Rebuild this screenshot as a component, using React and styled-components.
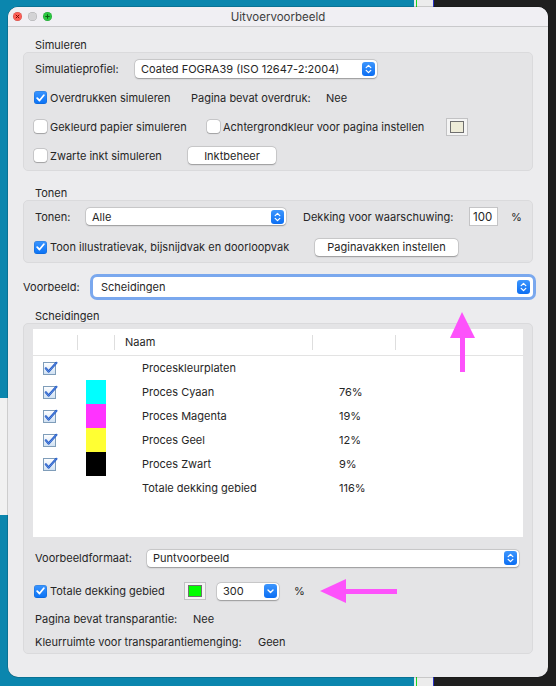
import React from "react";
import styled, { createGlobalStyle, css } from "styled-components";

const Global = createGlobalStyle`
  html, body { margin: 0; padding: 0; }
  body {
    width: 556px; height: 686px; overflow: hidden;
    font-family: "Inter", "Noto Sans", sans-serif;
    background:
      linear-gradient(#f1f1f1, #f1f1f1) 0 398px / 8px 117px no-repeat,
      linear-gradient(to right, #0b86ae 0 414px, #ececec 414px 416px, #1fd81f 416px 417px, #ececec 417px 433px, #2a33c8 433px 434px, #1f1f1f 434px);
  }
  #root { padding: 7px 0 0 8px; }
`;

const Window = styled.div`
  position: relative;
  width: 540px; height: 670px;
  background: #ececee;
  border-radius: 10px;
  overflow: hidden;
  box-shadow: 0 0 0 0.5px rgba(0,0,0,.3);
  color: #262626;
  font-size: 11px;
  display: flex; flex-direction: column;
`;

const TitleBar = styled.div`
  height: 19px; flex: none;
  background: #f0eff3;
  border-bottom: 1px solid #c9c9cb;
  display: grid; grid-template-columns: 60px 1fr 60px; align-items: center;
`;
const Lights = styled.div`display: flex; gap: 6px; padding-left: 5px;`;
const Light = styled.div`
  width: 9px; height: 9px; border-radius: 50%;
  background: ${p => p.$c};
  box-shadow: inset 0 0 0 0.5px rgba(0,0,0,.2);
  display: flex; align-items: center; justify-content: center;
`;
const Title = styled.div`text-align: center; font-size: 11.5px; color: #3d3d3d;`;

const Content = styled.div`padding: 0 15px; display: flex; flex-direction: column;`;

const SectionLabel = styled.div`
  margin-top: ${p => p.$mt}px; height: 14px; line-height: 14px; padding-left: 12px;
`;

const Group = styled.div`
  background: #e4e4e6;
  border: 1px solid #dadadc;
  border-radius: 5px;
  padding: ${p => p.$pad || "1px 11px 0"};
  display: flex; flex-direction: column;
`;

const Row = styled.div`
  display: flex; align-items: center; height: ${p => p.$h || 29}px; flex: none;
  margin-top: ${p => p.$mt || 0}px;
  padding-left: ${p => p.$pl || 0}px;
`;
const Cell = styled.div`
  width: ${p => p.$w ? p.$w + "px" : "auto"}; flex: none;
  display: flex; align-items: center; white-space: nowrap;
`;
const Text = styled.span`white-space: nowrap; margin-left: ${p => p.$ml || 0}px;`;

const Box = styled.div`
  width: 13px; height: 13px; border-radius: 3px; flex: none; box-sizing: border-box;
  margin-left: -1px; margin-right: 3px;
  display: flex; align-items: center; justify-content: center;
  ${p => p.$on ? css`
    background: linear-gradient(#3a95ff, #0a72f5);
    box-shadow: inset 0 0 0 0.5px rgba(0,0,0,.15);
  ` : css`
    background: #fff;
    box-shadow: 0 0 0 0.5px rgba(0,0,0,.22), 0 0.5px 1px rgba(0,0,0,.2);
  `}
`;

const Check = ({ on, children }) => (
  <>
    <Box $on={on}>
      {on && (
        <svg width="9" height="8" viewBox="0 0 9 8">
          <path d="M1.2 4.2 L3.5 6.5 L7.8 1.3" fill="none" stroke="#fff" strokeWidth="1.8" strokeLinecap="round" strokeLinejoin="round" />
        </svg>
      )}
    </Box>
    <Text>{children}</Text>
  </>
);

const Select = styled.div`
  width: ${p => p.$w}px; height: ${p => p.$h || 17}px; flex: none;
  box-sizing: border-box;
  background: #fff; border-radius: 4px;
  box-shadow: 0 0 0 0.5px rgba(0,0,0,.16), 0 0.5px 1.5px rgba(0,0,0,.28);
  display: flex; align-items: center; justify-content: space-between;
  padding: 0 2px 0 6px;
  ${p => p.$focus && css`
    box-shadow: 0 0 0 3px #7aa8ee, 0 0 0 0.5px rgba(0,0,0,.3);
    padding: 0 3px 0 8px;
  `}
`;

const Stepper = ({ single }) => (
  <svg width="13" height="14" viewBox="0 0 13 14">
    <defs>
      <linearGradient id="stg" x1="0" y1="0" x2="0" y2="1">
        <stop offset="0" stopColor="#3d96fd" />
        <stop offset="1" stopColor="#0b6ef3" />
      </linearGradient>
    </defs>
    <rect x="0" y="0" width="13" height="14" rx="3" fill="url(#stg)" />
    {single ? (
      <path d="M4 6 L6.5 8.5 L9 6" fill="none" stroke="#fff" strokeWidth="1.4" strokeLinecap="round" strokeLinejoin="round" />
    ) : (
      <>
        <path d="M4.2 5.6 L6.5 3.4 L8.8 5.6" fill="none" stroke="#fff" strokeWidth="1.3" strokeLinecap="round" strokeLinejoin="round" />
        <path d="M4.2 8.4 L6.5 10.6 L8.8 8.4" fill="none" stroke="#fff" strokeWidth="1.3" strokeLinecap="round" strokeLinejoin="round" />
      </>
    )}
  </svg>
);

const Button = styled.div`
  width: ${p => p.$w}px; height: 17px; flex: none;
  background: #fff; border-radius: 4px;
  box-shadow: 0 0 0 0.5px rgba(0,0,0,.16), 0 0.5px 1.5px rgba(0,0,0,.28);
  display: flex; align-items: center; justify-content: center;
  white-space: nowrap;
`;

const Swatch = styled.div`
  width: 22px; height: 18px; flex: none; box-sizing: border-box;
  border: 1px solid #c2c2c4; background: #f4f4f4;
  display: flex; align-items: center; justify-content: center;
  &::after {
    content: ""; width: 14px; height: 12px; box-sizing: border-box;
    border: 1px solid #6f6f6f; background: ${p => p.$c};
  }
`;

const NumInput = styled.div`
  width: 29px; height: 19px; flex: none; box-sizing: border-box;
  background: #fff; border: 1px solid #c4c4c6;
  display: flex; align-items: center; padding-left: 3px; font-size: 11.5px;
`;

const Table = styled.div`
  background: #fff; height: 208px; flex: none;
  display: flex; flex-direction: column;
`;
const cols = "44px 37px 198px 83px 1fr";
const HeadRow = styled.div`
  display: grid; grid-template-columns: ${cols};
  height: 27px; border-bottom: 1px solid #e3e3e3; box-sizing: border-box;
`;
const HeadCell = styled.div`
  display: flex; align-items: center;
  ${p => p.$sep && css`
    &::before { content: ""; width: 1px; height: 15px; background: #dedede; margin-right: 10px; }
  `}
`;
const DataRow = styled.div`
  display: grid; grid-template-columns: ${cols}; height: 24px;
`;
const DCell = styled.div`
  display: flex; align-items: center; padding-left: ${p => p.$pl || 0}px;
`;
const ColorBlock = styled.div`width: 20px; height: 24px; background: ${p => p.$c};`;

const OldCheck = () => (
  <svg width="16" height="14" viewBox="0 0 16 14">
    <defs>
      <linearGradient id="ocb" x1="0" y1="0" x2="0" y2="1">
        <stop offset="0" stopColor="#ffffff" />
        <stop offset="1" stopColor="#cfe0f2" />
      </linearGradient>
    </defs>
    <rect x="0.5" y="1.5" width="12" height="12" fill="url(#ocb)" stroke="#7f9db9" />
    <path d="M2.8 7.3 L5.6 10.6 L13.4 1.8" fill="none" stroke="#1f56c4" strokeWidth="2.2" strokeLinecap="round" strokeLinejoin="round" />
    <path d="M2.8 7.3 L5.6 10.6 L13.4 1.8" fill="none" stroke="#6f9de8" strokeWidth="0.8" strokeLinecap="round" strokeLinejoin="round" />
  </svg>
);

const Arrow = styled.svg`position: absolute; left: ${p => p.$x}px; top: ${p => p.$y}px;`;

const seps = [
  { name: "Proceskleurplaten", c: null, pct: "" },
  { name: "Proces Cyaan", c: "#00ffff", pct: "76%" },
  { name: "Proces Magenta", c: "#ff33ff", pct: "19%" },
  { name: "Proces Geel", c: "#ffff33", pct: "12%" },
  { name: "Proces Zwart", c: "#000000", pct: "9%" },
  { name: "Totale dekking gebied", c: null, pct: "116%", nocheck: true },
];

export default function App() {
  return (
    <>
      <Global />
      <Window>
        <TitleBar>
          <Lights>
            <Light $c="#fe5f57">
              <svg width="5" height="5" viewBox="0 0 5 5"><path d="M0.8 0.8 L4.2 4.2 M4.2 0.8 L0.8 4.2" stroke="#7a0d05" strokeWidth="1" /></svg>
            </Light>
            <Light $c="#d3d3d5" />
            <Light $c="#2ac840">
              <svg width="5" height="5" viewBox="0 0 5 5"><path d="M2.5 0.3 V4.7 M0.3 2.5 H4.7" stroke="#0b5a12" strokeWidth="1" /></svg>
            </Light>
          </Lights>
          <Title>Uitvoervoorbeeld</Title>
          <div />
        </TitleBar>
        <Content>
          <SectionLabel $mt={11}>Simuleren</SectionLabel>
          <Group>
            <Row>
              <Cell $w={100}><Text>Simulatieprofiel:</Text></Cell>
              <Select $w={242} $h={18}>
                <Text>Coated FOGRA39 (ISO 12647-2:2004)</Text>
                <Stepper />
              </Select>
            </Row>
            <Row>
              <Cell $w={156}><Check on>Overdrukken simuleren</Check></Cell>
              <Cell $w={135}><Text>Pagina bevat overdruk:</Text></Cell>
              <Text>Nee</Text>
            </Row>
            <Row>
              <Cell $w={173}><Check>Gekleurd papier simuleren</Check></Cell>
              <Cell $w={238}><Check>Achtergrondkleur voor pagina instellen</Check></Cell>
              <Swatch $c="#eeecd8" />
            </Row>
            <Row>
              <Cell $w={153}><Check>Zwarte inkt simuleren</Check></Cell>
              <Button $w={88}>Inktbeheer</Button>
            </Row>
          </Group>

          <SectionLabel $mt={15}>Tonen</SectionLabel>
          <Group $pad="0 11px">
            <Row $h={31}>
              <Cell $w={51}><Text>Tonen:</Text></Cell>
              <Select $w={200}>
                <Text>Alle</Text>
                <Stepper />
              </Select>
              <Cell $w={183}><Text $ml={17}>Dekking voor waarschuwing:</Text></Cell>
              <NumInput>100</NumInput>
              <Text $ml={13}>%</Text>
            </Row>
            <Row $h={30}>
              <Cell $w={280}><Check on>Toon illustratievak, bijsnijdvak en doorloopvak</Check></Cell>
              <Button $w={143}>Paginavakken instellen</Button>
            </Row>
          </Group>

          <Row $h={22} $mt={13}>
            <Cell $w={70}><Text>Voorbeeld:</Text></Cell>
            <Select $w={440} $h={20} $focus>
              <Text>Scheidingen</Text>
              <Stepper />
            </Select>
          </Row>

          <SectionLabel $mt={11}>Scheidingen</SectionLabel>
          <Group $pad="5px 9px 0">
            <Table>
              <HeadRow>
                <HeadCell />
                <HeadCell $sep />
                <HeadCell $sep>Naam</HeadCell>
                <HeadCell $sep />
                <HeadCell $sep />
              </HeadRow>
              {seps.map(s => (
                <DataRow key={s.name}>
                  <DCell $pl={10}>{!s.nocheck && <OldCheck />}</DCell>
                  <DCell $pl={9}>{s.c && <ColorBlock $c={s.c} />}</DCell>
                  <DCell $pl={28}>{s.name}</DCell>
                  <DCell $pl={27}>{s.pct}</DCell>
                  <DCell />
                </DataRow>
              ))}
            </Table>
            <Row $h={24} $mt={9} $pl={2}>
              <Cell $w={112}><Text>Voorbeeldformaat:</Text></Cell>
              <Select $w={372}>
                <Text>Puntvoorbeeld</Text>
                <Stepper />
              </Select>
            </Row>
            <Row $h={24} $mt={9} $pl={2}>
              <Cell $w={149}><Check on>Totale dekking gebied</Check></Cell>
              <Swatch $c="#00ff00" />
              <Cell $w={11} />
              <Select $w={62}>
                <Text>300</Text>
                <Stepper single />
              </Select>
              <Text $ml={15}>%</Text>
            </Row>
            <Row $h={24} $mt={4} $pl={2}>
              <Cell $w={158}><Text>Pagina bevat transparantie:</Text></Cell>
              <Text>Nee</Text>
            </Row>
            <Row $h={22} $pl={2}>
              <Cell $w={223}><Text>Kleurruimte voor transparantiemenging:</Text></Cell>
              <Text>Geen</Text>
            </Row>
          </Group>
        </Content>

        <Arrow $x={441} $y={305} width="28" height="61" viewBox="0 0 28 61">
          <polygon points="13,0 1,26 26,26" fill="#fd52fb" />
          <rect x="11" y="25" width="5" height="35" fill="#fd52fb" />
        </Arrow>
        <Arrow $x={312} $y={571} width="78" height="26" viewBox="0 0 78 26">
          <polygon points="0,13 26,1 26,25" fill="#fd52fb" />
          <rect x="25" y="11" width="52" height="5" fill="#fd52fb" />
        </Arrow>
      </Window>
    </>
  );
}
